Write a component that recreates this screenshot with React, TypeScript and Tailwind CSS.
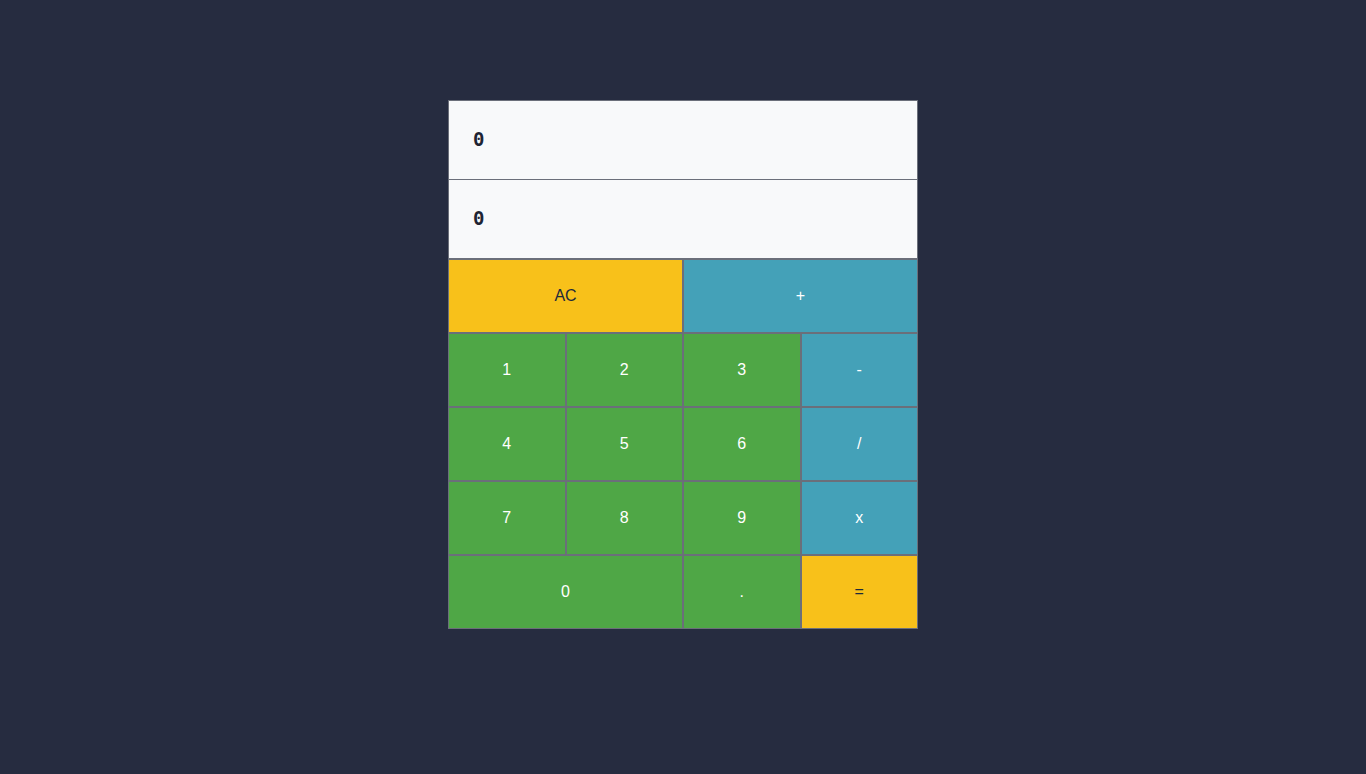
import React from "react";

type Btn = { label: string; color: string; span?: boolean; dark?: boolean };

const yellow = "bg-[#f8c11a]";
const green = "bg-[#4fa746]";
const blue = "bg-[#44a1b8]";

const buttons: Btn[] = [
  { label: "AC", color: yellow, span: true, dark: true },
  { label: "+", color: blue, span: true },
  { label: "1", color: green },
  { label: "2", color: green },
  { label: "3", color: green },
  { label: "-", color: blue },
  { label: "4", color: green },
  { label: "5", color: green },
  { label: "6", color: green },
  { label: "/", color: blue },
  { label: "7", color: green },
  { label: "8", color: green },
  { label: "9", color: green },
  { label: "x", color: blue },
  { label: "0", color: green, span: true },
  { label: ".", color: green },
  { label: "=", color: yellow, dark: true },
];

export default function App() {
  return (
    <div className="min-h-screen w-full bg-[#262c40] flex justify-center pt-[100px]" style={{ fontFamily: '"Liberation Sans", Arial, sans-serif' }}>
      <div className="w-[470px] flex flex-col h-fit">
        <div className="h-[80px] bg-[#f8f9fa] border border-[#6b6f7a] flex items-center pl-[24px] pb-[2px] text-[19px] font-bold text-[#1e2433]" style={{ fontFamily: '"DejaVu Sans Mono", monospace' }}>
          0
        </div>
        <div className="h-[79px] bg-[#f8f9fa] border border-t-0 border-[#6b6f7a] flex items-center pl-[24px] pb-[2px] text-[19px] font-bold text-[#1e2433]" style={{ fontFamily: '"DejaVu Sans Mono", monospace' }}>
          0
        </div>
        <div className="grid grid-cols-4">
          {buttons.map((b, i) => (
            <div
              key={i}
              className={`${b.color} ${b.span ? "col-span-2" : ""} ${b.dark ? "text-[#1e2a3a]" : "text-white"} h-[74px] border border-[#6b6f7a] flex items-center justify-center text-[16px]`}
            >
              {b.label}
            </div>
          ))}
        </div>
      </div>
    </div>
  );
}
